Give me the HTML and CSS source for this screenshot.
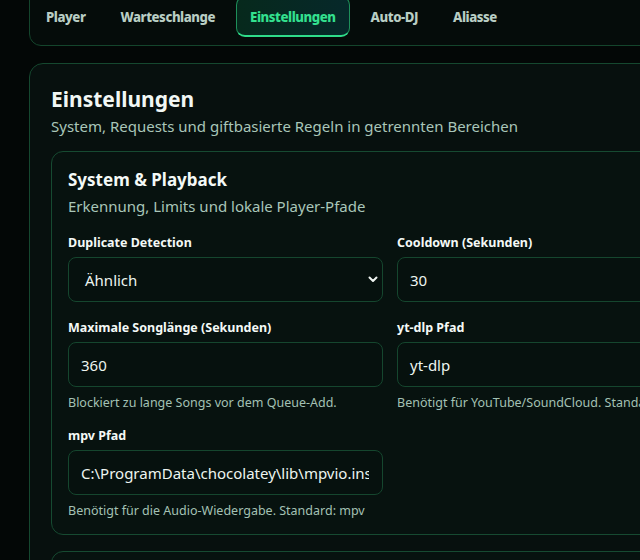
FILE: index.html
```html
<!DOCTYPE html>
<html lang="de">
<head>
<meta charset="utf-8">
<link rel="stylesheet" href="styles.css">
</head>
<body>
<div class="page">
  <nav class="tabs">
    <span class="tab">Player</span>
    <span class="tab">Warteschlange</span>
    <span class="tab active">Einstellungen</span>
    <span class="tab">Auto-DJ</span>
    <span class="tab">Aliasse</span>
  </nav>
  <section class="panel">
    <h1 class="panel-title">Einstellungen</h1>
    <p class="panel-sub">System, Requests und giftbasierte Regeln in getrennten Bereichen</p>
    <div class="card">
      <h2 class="card-title">System &amp; Playback</h2>
      <p class="card-sub">Erkennung, Limits und lokale Player-Pfade</p>
      <div class="grid">
        <div class="field">
          <label class="label">Duplicate Detection</label>
          <div class="select">
            <span>Ähnlich</span>
            <svg class="chev" width="10" height="7" viewBox="0 0 10 7"><path d="M1.5 1.5 L5 5 L8.5 1.5" fill="none" stroke="#eef4f0" stroke-width="2" stroke-linecap="round" stroke-linejoin="round"/></svg>
          </div>
        </div>
        <div class="field">
          <label class="label">Cooldown (Sekunden)</label>
          <div class="input">30</div>
        </div>
        <div class="field">
          <label class="label">Maximale Songlänge (Sekunden)</label>
          <div class="input">360</div>
          <p class="help">Blockiert zu lange Songs vor dem Queue-Add.</p>
        </div>
        <div class="field">
          <label class="label">yt-dlp Pfad</label>
          <div class="input">yt-dlp</div>
          <p class="help">Benötigt für YouTube/SoundCloud. Standard: yt-dlp</p>
        </div>
        <div class="field">
          <label class="label">mpv Pfad</label>
          <div class="input"><span class="value-clip">C:\ProgramData\chocolatey\lib\mpvio.install\tools\mpv.exe</span></div>
          <p class="help">Benötigt für die Audio-Wiedergabe. Standard: mpv</p>
        </div>
      </div>
    </div>
    <div class="card next"></div>
  </section>
</div>
</body>
</html>
```
FILE: styles.css
```css
* { box-sizing: border-box; }
html, body {
  margin: 0;
  padding: 0;
  background: #030706;
  overflow: hidden;
  height: 560px;
}
body {
  font-family: "Noto Sans", "Open Sans", sans-serif;
  color: #eaf3ee;
}
.page {
  width: 780px;
  margin-left: 29px;
  margin-top: -13px;
}
.tabs {
  display: flex;
  gap: 7px;
  align-items: center;
  padding: 9px 2px;
  border: 1px solid #14452c;
  border-radius: 12px;
  background: #050c0a;
  height: 59px;
}
.tab {
  font-family: "Noto Sans", sans-serif;
  font-weight: 800;
  font-size: 13.2px;
  letter-spacing: -0.45px;
  color: #b9cec4;
  padding: 0 13px;
  height: 41px;
  line-height: 41px;
  border-radius: 9px;
  border: 1px solid transparent;
  white-space: nowrap;
}
.tab.active {
  color: #33e08f;
  border: 1px solid #1e8f5a;
  border-bottom: 2px solid #2fdc8a;
  background: linear-gradient(90deg, #06291c, #06282a);
  margin-top: -1px;
}
.panel {
  margin-top: 17px;
  border: 1px solid #15482f;
  border-radius: 14px;
  background: #07100e;
  padding: 20px 21px;
  height: 560px;
}
.panel-title {
  margin: 0;
  font-size: 21px;
  font-weight: 700;
  line-height: 30px;
  color: #f1f7f4;
}
.panel-sub {
  margin: 2px 0 0;
  font-size: 15px;
  line-height: 20px;
  color: #a9c6b9;
}
.card {
  margin-top: 15px;
  border: 1px solid #164a31;
  border-radius: 12px;
  background: #07120f;
  padding: 17px 16px 16px;
}
.card.next { margin-top: 16px; height: 40px; }
.card-title {
  margin: 0;
  font-size: 17px;
  font-weight: 700;
  line-height: 22px;
  color: #f4f9f6;
}
.card-sub {
  margin: 5px 0 0;
  font-size: 15px;
  line-height: 20px;
  color: #a9c6b9;
}
.grid {
  margin-top: 19px;
  display: grid;
  grid-template-columns: 315px 315px;
  column-gap: 14px;
  row-gap: 18px;
}
.field { display: flex; flex-direction: column; }
.label {
  font-size: 12.5px;
  font-weight: 700;
  line-height: 16px;
  color: #f4f9f6;
  margin-bottom: 6px;
}
.select, .input {
  height: 45px;
  border: 1px solid #15462e;
  border-radius: 8px;
  background: #06110e;
  font-size: 15px;
  color: #edf5f0;
  display: flex;
  align-items: center;
  padding: 0 13px 0 12px;
  white-space: nowrap;
}
.select { padding-left: 16px; justify-content: space-between; padding-right: 4px; }
.value-clip { overflow: hidden; display: block; }
.help {
  margin: 9px 0 0;
  font-size: 12.5px;
  line-height: 14px;
  color: #a3c1b4;
}
```
